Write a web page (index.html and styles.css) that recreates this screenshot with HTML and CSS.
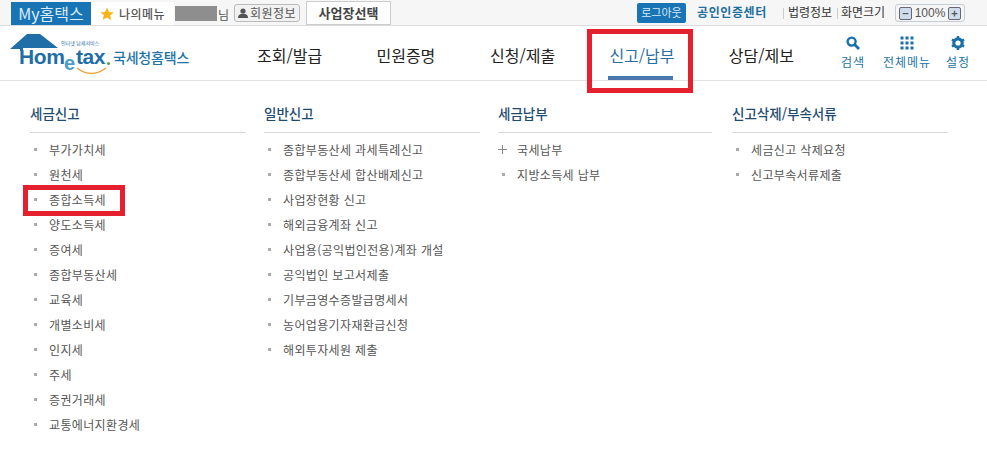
FILE: index.html
```html
<!DOCTYPE html>
<html lang="ko">
<head>
<meta charset="utf-8">
<title>Hometax</title>
<link rel="stylesheet" href="styles.css">
</head>
<body>
<div class="topbar">
  <a class="my">My홈택스</a>
  <div class="fav">
    <svg class="star" viewBox="0 0 14 14" width="14" height="14"><path d="M7 0.5l2 4.4 4.8.5-3.6 3.2 1 4.7L7 10.4l-4.2 2.4 1-4.7L.2 5.4l4.8-.5z" fill="#f5b519"/></svg>
    <span>나의메뉴</span>
  </div>
  <span class="redact"></span><span class="nim">님</span>
  <a class="member">
    <svg viewBox="0 0 10 10" width="10" height="10"><circle cx="5" cy="3" r="2.6" fill="#555"/><path d="M0 10c0-3.2 2-4.2 5-4.2s5 1 5 4.2z" fill="#555"/></svg>
    회원정보
  </a>
  <a class="biz">사업장선택</a>
  <div class="spacer"></div>
  <a class="logout">로그아웃</a>
  <a class="cert">공인인증센터</a>
  <span class="sep"></span><a class="util">법령정보</a>
  <span class="sep sep2"></span><a class="util">화면크기</a>
  <div class="zoom">
    <span class="zbtn">−</span><span class="pct">100%</span><span class="zbtn">+</span>
  </div>
</div>

<header class="nav">
  <div class="logo">
    <svg viewBox="0 0 185 44" width="185" height="44">
      <path d="M1 16 L18 1 L31 1 L49 15 L14 15 L14 18 L11 18 L11 16 Z" fill="#1f6ea8"/>
      <path d="M68 35 Q82 46 97 35" stroke="#f0a23c" stroke-width="1.5" fill="none"/>
      <circle cx="99.5" cy="30.5" r="1.6" fill="#5aa83c"/>
      <text class="l-small" x="52" y="12">인터넷 납세서비스</text>
      <text class="l-home" x="10" y="31">Hom</text>
      <text class="l-e" x="55" y="37">e</text>
      <text class="l-home" x="67" y="31">tax</text>
      <text class="l-name" x="104" y="30">국세청홈택스</text>
    </svg>
  </div>
  <nav class="gnb">
    <a class="g1">조회/발급</a>
    <a class="g2">민원증명</a>
    <a class="g3">신청/제출</a>
    <a class="g4 on">신고/납부</a>
    <a class="g5">상담/제보</a>
  </nav>
  <div class="tools">
    <a class="tool t1">
      <svg viewBox="0 0 14 14" width="14" height="14"><circle cx="5.6" cy="5.6" r="4" fill="none" stroke="#1a6fa8" stroke-width="2.4"/><path d="M8.6 8.6L13 13" stroke="#1a6fa8" stroke-width="2.8"/></svg>
      <span>검색</span>
    </a>
    <a class="tool t2">
      <svg viewBox="0 0 14 14" width="14" height="14" fill="#1a6fa8"><rect x="0.5" y="0.5" width="3" height="3"/><rect x="5.5" y="0.5" width="3" height="3"/><rect x="10.5" y="0.5" width="3" height="3"/><rect x="0.5" y="5.5" width="3" height="3"/><rect x="5.5" y="5.5" width="3" height="3"/><rect x="10.5" y="5.5" width="3" height="3"/><rect x="0.5" y="10.5" width="3" height="3"/><rect x="5.5" y="10.5" width="3" height="3"/><rect x="10.5" y="10.5" width="3" height="3"/></svg>
      <span>전체메뉴</span>
    </a>
    <a class="tool t3">
      <svg viewBox="0 0 14 14" width="14" height="14"><circle cx="7" cy="7" r="4.2" fill="none" stroke="#1a6fa8" stroke-width="3.2"/><path d="M7 0v3M7 11v3M0.9 3.5l2.6 1.5M10.5 9l2.6 1.5M0.9 10.5l2.6-1.5M10.5 5l2.6-1.5" stroke="#1a6fa8" stroke-width="2.4"/></svg>
      <span>설정</span>
    </a>
  </div>
</header>

<main class="menu">
  <section class="col">
    <h2>세금신고</h2>
    <ul>
      <li>부가가치세</li><li>원천세</li><li>종합소득세</li><li>양도소득세</li><li>증여세</li><li>종합부동산세</li><li>교육세</li><li>개별소비세</li><li>인지세</li><li>주세</li><li>증권거래세</li><li>교통에너지환경세</li>
    </ul>
  </section>
  <section class="col">
    <h2>일반신고</h2>
    <ul>
      <li>종합부동산세 과세특례신고</li><li>종합부동산세 합산배제신고</li><li>사업장현황 신고</li><li>해외금융계좌 신고</li><li>사업용(공익법인전용)계좌 개설</li><li>공익법인 보고서제출</li><li>기부금영수증발급명세서</li><li>농어업용기자재환급신청</li><li>해외투자세원 제출</li>
    </ul>
  </section>
  <section class="col narrow">
    <h2>세금납부</h2>
    <ul>
      <li class="plus">국세납부</li><li>지방소득세 납부</li>
    </ul>
  </section>
  <section class="col">
    <h2>신고삭제/부속서류</h2>
    <ul>
      <li>세금신고 삭제요청</li><li>신고부속서류제출</li>
    </ul>
  </section>
</main>

<div class="mark mark-nav"></div>
<div class="mark mark-item"></div>
</body>
</html>
```
FILE: styles.css
```css
* { box-sizing: border-box; }
html, body { margin: 0; padding: 0; }
body {
  width: 987px;
  height: 449px;
  position: relative;
  overflow: hidden;
  background: #fff;
  color: #333;
  font-family: "Noto Sans CJK KR", "Noto Sans", sans-serif;
}
a { color: inherit; text-decoration: none; }

.topbar {
  height: 26px;
  padding: 2px 0 0 11px;
  display: flex;
  align-items: flex-start;
  background: #f6f6f6;
  border-bottom: 1px solid #dcdcdc;
  font-size: 12px;
  line-height: 14px;
  white-space: nowrap;
}
.my {
  width: 80px;
  height: 23px;
  background: #1874b4;
  color: #dcecf8;
  font-size: 16px;
  line-height: 22px;
  text-align: center;
}
.fav {
  width: 83px;
  height: 23px;
  background: #fff;
  display: flex;
  align-items: center;
  padding-left: 9px;
  gap: 5px;
  color: #555;
  font-weight: 500;
  letter-spacing: 0.5px;
}
.star { flex: none; }
.redact { width: 42px; height: 15px; margin-top: 4px; background: #8e8e8e; margin-left: 1px; }
.nim { margin: 6px 0 0 1px; width: 16px; color: #555; }
.member {
  width: 66px;
  height: 18px;
  margin-top: 2px;
  border: 1px solid #bbb;
  border-radius: 3px;
  background: #f1f1f1;
  display: flex;
  align-items: center;
  justify-content: center;
  gap: 2px;
  color: #555;
  letter-spacing: 0.5px;
}
.biz {
  width: 85px;
  height: 24px;
  margin: -1px 0 0 6px;
  border: 1px solid #ccc;
  background: #fff;
  text-align: center;
  line-height: 22px;
  font-size: 13px;
  font-weight: 700;
  color: #444;
}
.spacer { flex: 1; }
.logout {
  width: 49px;
  height: 20px;
  margin-top: 1px;
  border-radius: 2px;
  background: #1874b4;
  color: #d8eaf6;
  font-size: 11px;
  text-align: center;
  line-height: 19px;
}
.cert {
  margin: 3px 0 0 11px;
  width: 70px;
  color: #1f6f9e;
  font-weight: 700;
  letter-spacing: 0.6px;
}
.sep { width: 1px; height: 11px; margin: 6px 4px 0 16px; background: #ccc; }
.sep2 { margin-left: 5px; margin-right: 3px; }
.util { margin-top: 3px; width: 44px; color: #333; }
.zoom {
  width: 70px;
  height: 18px;
  margin: 2px 22px 0 10px;
  padding: 0 3px;
  border: 1px solid #c4ccd4;
  border-radius: 3px;
  display: flex;
  align-items: center;
  justify-content: space-between;
  color: #555;
}
.zbtn {
  width: 13px;
  height: 13px;
  border: 1px solid #667;
  border-radius: 2px;
  background: #cfdceb;
  font-size: 11px;
  line-height: 10px;
  text-align: center;
  font-weight: 700;
}
.pct { font-family: "Liberation Sans", sans-serif; font-size: 12px; }

.nav {
  height: 55px;
  display: flex;
  align-items: flex-start;
  border-bottom: 1px solid #e2e2e2;
}
.logo { width: 257px; padding: 7px 0 0 9px; flex: none; }
.logo svg { display: block; }
.l-small { font-size: 5px; fill: #1f6ea8; }
.l-home { font-family: "Liberation Sans", sans-serif; font-weight: 700; font-size: 21px; fill: #1f6ea8; letter-spacing: -0.4px; }
.l-e { font-family: "Liberation Sans", sans-serif; font-weight: 700; font-size: 20px; fill: #4f9cc8; }
.l-name { font-size: 14px; font-weight: 500; fill: #2273a8; letter-spacing: -0.2px; }

.gnb { display: flex; width: 537px; font-size: 16px; line-height: 24px; color: #222; white-space: nowrap; }
.gnb a { display: block; height: 54px; padding-top: 17px; }
.g1 { width: 120px; }
.g2 { width: 114px; }
.g3 { width: 120px; }
.g4 { width: 120px; }
.gnb .on { color: #2a6f9f; position: relative; }
.gnb .on::after {
  content: "";
  position: absolute;
  left: -1px;
  top: 50px;
  width: 65px;
  height: 4px;
  background: #4a77ae;
}
.tools { flex: 1; display: flex; height: 54px; padding-top: 10px; font-size: 12px; color: #2273a8; line-height: 16px; white-space: nowrap; letter-spacing: 0.9px; }
.tool { display: flex; flex-direction: column; align-items: center; gap: 4px; text-align: center; }
.t1 { width: 24px; margin-left: 47px; }
.t2 { width: 48px; margin-left: 18px; }
.t3 { width: 24px; margin-left: 15px; }

.menu {
  padding: 22px 0 0 30px;
  display: flex;
  gap: 18px;
}
.col { width: 216px; flex: none; }
.narrow h2 { width: 214px; }
.col h2 {
  margin: 0;
  height: 30px;
  border-bottom: 1px solid #d9d9d9;
  font-size: 13.5px;
  line-height: 20px;
  font-weight: 500;
  color: #1e4c70;
}
.col ul { list-style: none; margin: 4px 0 0; padding: 0; }
.col li {
  position: relative;
  height: 25px;
  padding-left: 19px;
  font-size: 12px;
  letter-spacing: 0.36px;
  line-height: 25px;
  color: #555;
  white-space: nowrap;
}
.col li::before {
  content: "";
  position: absolute;
  left: 4px;
  top: 11px;
  width: 3px;
  height: 3px;
  background: #aaa;
}
.col li.plus::before {
  left: 0;
  top: 8px;
  width: 9px;
  height: 9px;
  background:
    linear-gradient(#888, #888) center / 9px 1px no-repeat,
    linear-gradient(#888, #888) center / 1px 9px no-repeat;
}

.mark { position: absolute; border: 5px solid #e5202e; }
.mark-nav { left: 587px; top: 29px; width: 106px; height: 64px; }
.mark-item { left: 23px; top: 185px; width: 102px; height: 31px; }
```
